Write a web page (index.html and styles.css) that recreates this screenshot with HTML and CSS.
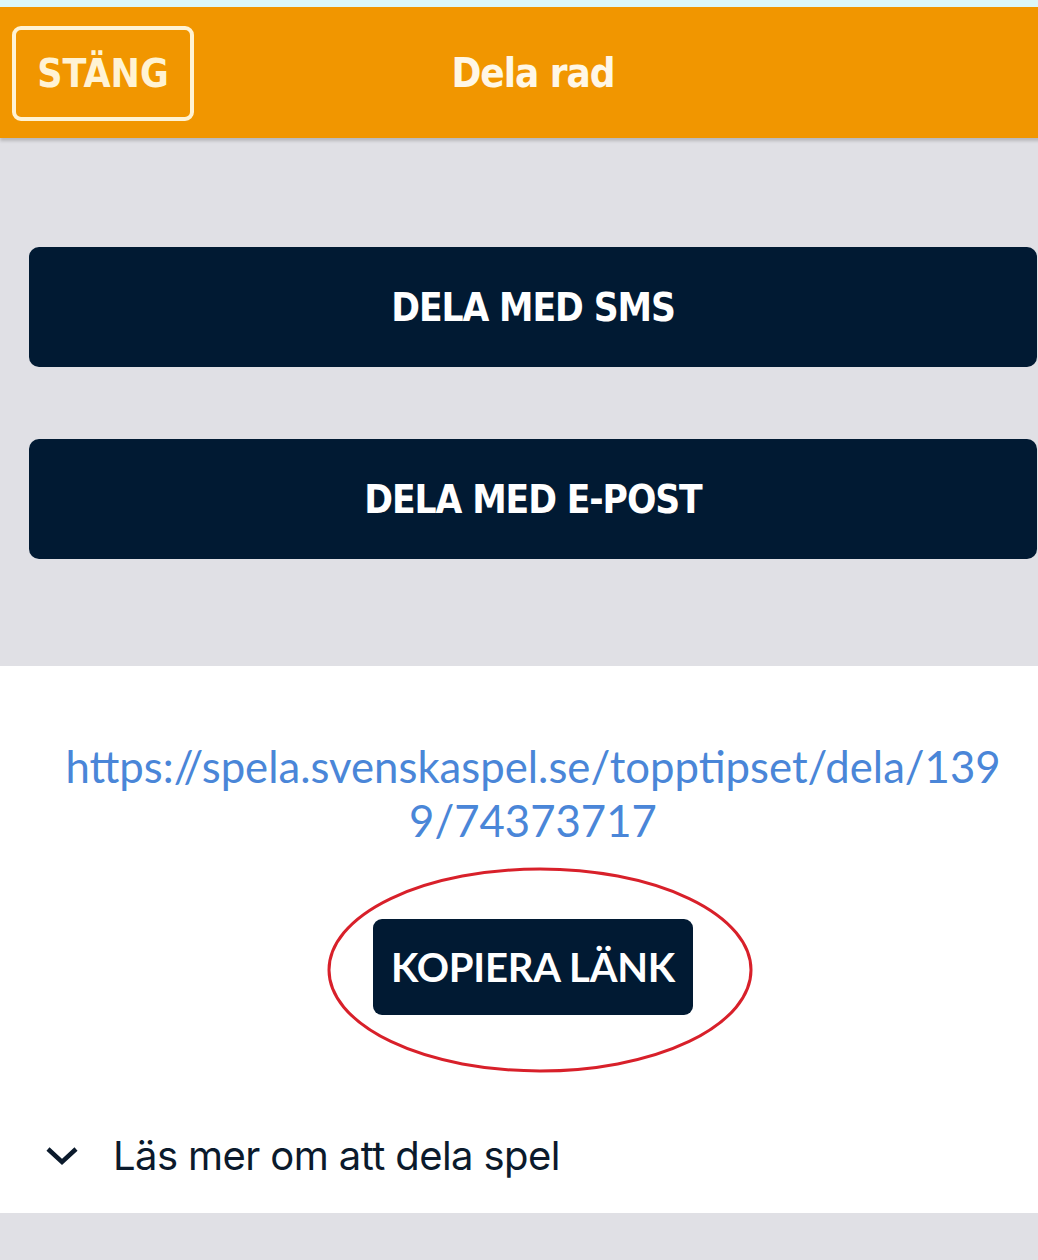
FILE: index.html
```html
<!DOCTYPE html>
<html lang="sv">
<head>
<meta charset="utf-8">
<title>Dela rad</title>
<link rel="stylesheet" href="styles.css">
</head>
<body>
<div class="page">
  <div class="topstrip"></div>
  <header class="header">
    <button class="close-btn">STÄNG</button>
    <h1 class="title">Dela rad</h1>
  </header>
  <section class="share">
    <button class="share-btn">DELA MED SMS</button>
    <button class="share-btn">DELA MED E-POST</button>
  </section>
  <section class="link-section">
    <p class="link">https://spela.svenskaspel.se/topptipset/dela/139<br>9/74373717</p>
    <div class="copy-wrap">
      <button class="copy-btn">KOPIERA LÄNK</button>
      <svg class="ring" width="430" height="210" viewBox="0 0 430 210" aria-hidden="true">
        <ellipse cx="215" cy="105" rx="211" ry="101" fill="none" stroke="#d8202a" stroke-width="3"/>
      </svg>
    </div>
    <div class="more">
      <svg class="chev" width="34" height="22" viewBox="0 0 34 22" aria-hidden="true">
        <path d="M3 4 L17 17 L31 4" fill="none" stroke="#0b1a2c" stroke-width="4.5"/>
      </svg>
      <span class="more-text">Läs mer om att dela spel</span>
    </div>
  </section>
  <div class="footer-gray"></div>
</div>
</body>
</html>
```

FILE: styles.css
```css
html, body {
  margin: 0;
  padding: 0;
  overflow: hidden;
  background: #e0e0e5;
}
.page {
  width: 1066px;
  display: flex;
  flex-direction: column;
  font-family: "Open Sans", "DejaVu Sans", sans-serif;
}
.topstrip {
  height: 7px;
  background: #dcf7fa;
}
.header {
  position: relative;
  height: 131px;
  background: #f19600;
  box-shadow: 0 3px 3px rgba(0,0,0,0.18);
  display: flex;
  align-items: center;
  justify-content: center;
  z-index: 1;
}
.close-btn {
  position: absolute;
  left: 12px;
  top: 19px;
  width: 182px;
  height: 95px;
  box-sizing: border-box;
  border: 4px solid #fff3d4;
  border-radius: 9px;
  background: transparent;
  color: #fff3d4;
  font-family: "DejaVu Sans Condensed", "DejaVu Sans", sans-serif;
  font-weight: bold;
  font-size: 39px;
  padding: 0;
}
.title {
  margin: 0;
  color: #fff7e6;
  font-family: "DejaVu Sans Condensed", "DejaVu Sans", sans-serif;
  font-weight: bold;
  font-size: 40px;
  letter-spacing: -1px;
}
.share {
  height: 528px;
  box-sizing: border-box;
  padding: 109px 29px 0;
  display: flex;
  flex-direction: column;
  gap: 72px;
  background: #e0e0e5;
}
.share-btn {
  height: 120px;
  border: none;
  border-radius: 10px;
  background: #011a33;
  color: #ffffff;
  font-family: "DejaVu Sans Condensed", "DejaVu Sans", sans-serif;
  font-weight: bold;
  font-size: 38.5px;
  letter-spacing: -1.1px;
}
.link-section {
  height: 547px;
  background: #ffffff;
  display: flex;
  flex-direction: column;
  align-items: center;
  box-sizing: border-box;
  padding-top: 73px;
}
.link {
  margin: 0;
  text-align: center;
  color: #4a86d8;
  font-family: "Lato", sans-serif;
  font-size: 43.7px;
  line-height: 54px;
}
.copy-wrap {
  position: relative;
  margin-top: 72px;
}
.copy-btn {
  display: block;
  width: 320px;
  height: 96px;
  border: none;
  border-radius: 9px;
  background: #011a33;
  color: #ffffff;
  font-family: "Lato", sans-serif;
  font-weight: bold;
  font-size: 40px;
  letter-spacing: -0.2px;
  padding: 0;
}
.ring {
  position: absolute;
  left: -48px;
  top: -54px;
}
.more {
  align-self: flex-start;
  margin-top: 116px;
  margin-left: 45px;
  display: flex;
  align-items: center;
  gap: 34px;
}
.chev {
  display: block;
}
.more-text {
  color: #0b1a2c;
  font-family: "Inter", sans-serif;
  font-size: 40px;
  letter-spacing: -0.6px;
}
.footer-gray {
  height: 47px;
  background: #e0e0e5;
}
```
